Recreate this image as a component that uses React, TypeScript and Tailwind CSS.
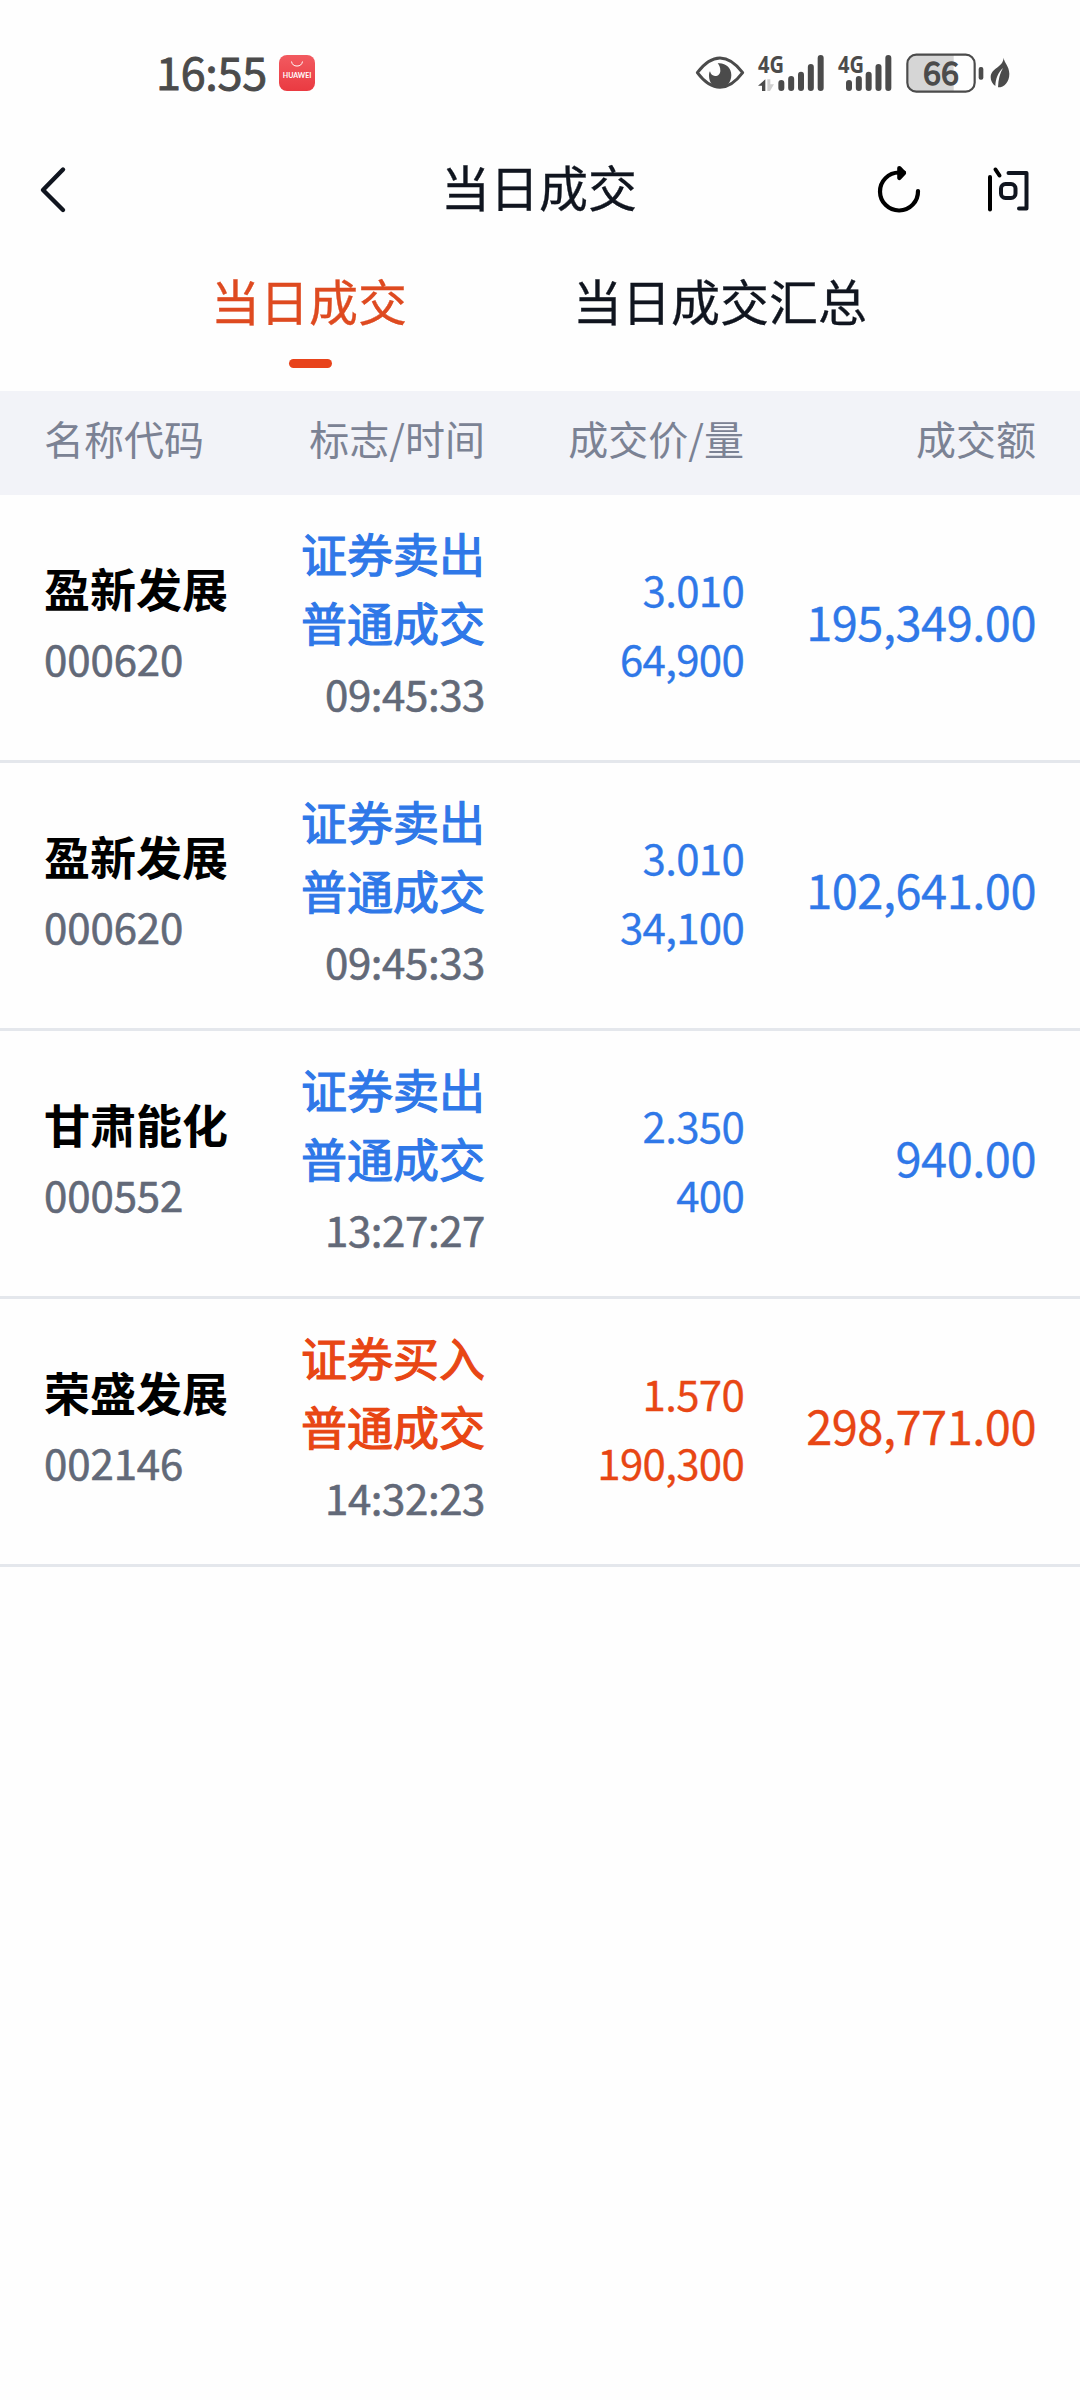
import React from 'react';

interface Trade {
  name: string;
  code: string;
  action: string;
  kind: string;
  time: string;
  price: string;
  volume: string;
  amount: string;
  side: 'sell' | 'buy';
}

const trades: Trade[] = [
  { name: '盈新发展', code: '000620', action: '证券卖出', kind: '普通成交', time: '09:45:33', price: '3.010', volume: '64,900', amount: '195,349.00', side: 'sell' },
  { name: '盈新发展', code: '000620', action: '证券卖出', kind: '普通成交', time: '09:45:33', price: '3.010', volume: '34,100', amount: '102,641.00', side: 'sell' },
  { name: '甘肃能化', code: '000552', action: '证券卖出', kind: '普通成交', time: '13:27:27', price: '2.350', volume: '400', amount: '940.00', side: 'sell' },
  { name: '荣盛发展', code: '002146', action: '证券买入', kind: '普通成交', time: '14:32:23', price: '1.570', volume: '190,300', amount: '298,771.00', side: 'buy' },
];

const EyeIcon = () => (
  <svg width="50" height="36" viewBox="44 46 150 108" fill="none">
    <path d="M51 99 Q84 55 119 55 Q154 55 187 99 Q154 143 119 143 Q84 143 51 99 Z" stroke="#4b4b4b" strokeWidth="9" strokeLinejoin="round" />
    <path d="M112 71 C134 68 153 84 153 106 C153 130 137 144 119 144 C100 144 86 130 86 108 C86 102 87 98 89 95 C91 104 97 109 104 109 C114 109 120 102 120 93 C120 83 117 77 112 71 Z" fill="#4b4b4b" />
  </svg>
);

const bars = [
  { x: 0, y: 120 },
  { x: 29.5, y: 108 },
  { x: 59, y: 95 },
  { x: 88.5, y: 72 },
  { x: 118, y: 45 },
];

const SignalIcon = ({ arrows = false }: { arrows?: boolean }) => {
  const start = arrows ? 61 : 24;
  return (
    <svg width={arrows ? 66 : 54} height="38" viewBox={arrows ? '0 42 198 114' : '0 42 162 114'} className="overflow-visible">
      <text x="0" y="98" fontSize="72" fontWeight="700" textLength="78" lengthAdjust="spacingAndGlyphs" fill="#4b4b4b" className="font-['Noto_Sans']">4G</text>
      {arrows && (
        <>
          <path d="M22 118 V153 H12 V137 H0 Z" fill="#4b4b4b" />
          <path d="M28 118 H37 V133 H48 L36 153 H28 Z" fill="#cfcfcf" />
        </>
      )}
      {bars.map((b) => (
        <rect key={b.x} x={start + b.x} y={b.y} width="18" height={153 - b.y} rx="9" fill="#4b4b4b" />
      ))}
    </svg>
  );
};

const BatteryIcon = () => (
  <svg width="78" height="40" viewBox="79 38 234 120" className="overflow-visible">
    <path d="M110 44 H222 V153 H110 Q84 153 84 127 V70 Q84 44 110 44 Z" fill="#d6d6d6" />
    <rect x="83" y="43" width="202" height="111" rx="27" fill="none" stroke="#4b4b4b" strokeWidth="6.5" />
    <rect x="297" y="80" width="14" height="38" rx="6" fill="#4b4b4b" />
    <text x="184" y="135" fontSize="97" textAnchor="middle" strokeWidth="4" stroke="#4b4b4b" fill="#4b4b4b" className="font-['Noto_Sans_CJK_SC']">66</text>
  </svg>
);

const LeafIcon = () => (
  <svg width="20" height="32" viewBox="330 50 60 96">
    <path d="M371 52 C372 66 388 78 388 100 C388 124 374 141 354 141 C355 117 360 98 369 83 C354 97 347 115 346 137 C337 131 332 121 332 110 C333 82 369 82 371 52 Z" fill="#4b4b4b" />
  </svg>
);

const HuaweiBadge = () => (
  <svg width="36" height="36" viewBox="0 0 36 36">
    <defs>
      <linearGradient id="hw" x1="0" y1="0" x2="0" y2="1">
        <stop offset="0" stopColor="#f25a60" />
        <stop offset="1" stopColor="#ea3a41" />
      </linearGradient>
    </defs>
    <rect width="36" height="36" rx="8" fill="url(#hw)" />
    <path d="M12.5 6.5 A5.6 5.6 0 0 0 23.5 6.5" fill="none" stroke="#fff" strokeWidth="1" />
    <text x="3.8" y="23" fontSize="6.6" fontWeight="700" textLength="28.6" lengthAdjust="spacingAndGlyphs" fill="#fff" className="font-['Lato']">HUAWEI</text>
  </svg>
);

const StatusBar = () => (
  <div className="flex h-[146px] items-center pl-[156px] pr-[70px] text-[#4b4b4b]">
    <span className="w-[123px] pb-[5px] text-[45px] leading-none tracking-[-0.3px] [-webkit-text-stroke:0.9px_currentColor]">16:55</span>
    <HuaweiBadge />
    <div className="ml-auto flex items-center">
      <EyeIcon />
      <span className="ml-[13px]"><SignalIcon arrows /></span>
      <span className="ml-[14px]"><SignalIcon /></span>
      <span className="ml-[14px]"><BatteryIcon /></span>
      <span className="ml-[6px]"><LeafIcon /></span>
    </div>
  </div>
);

const NavBar = () => (
  <div className="grid h-[88px] grid-cols-[1fr_auto_1fr] items-center pl-[38px] pr-[40px]">
    <svg width="32" height="52" viewBox="38 164 32 52" fill="none" stroke="#10151f" strokeWidth="4.4" strokeLinecap="round" strokeLinejoin="round">
      <path d="M63 169.5 L43 190 L63 210" />
    </svg>
    <h1 className="pb-[10px] text-[49px] leading-none text-[#10151f] [-webkit-text-stroke:0.3px_currentColor]">当日成交</h1>
    <div className="flex items-center justify-end gap-[60px] pr-[6px]">
      <svg width="50" height="52" viewBox="874 164 50 52" fill="none" stroke="#000" strokeWidth="4.2" strokeLinecap="round" strokeLinejoin="round">
        <path d="M918 191 A19 19 0 1 1 899 172.5 H904" />
        <path d="M899.3 168 L904 173 L899.3 178 Z" fill="#000" />
      </svg>
      <svg width="50" height="52" viewBox="984 164 50 52" fill="none" stroke="#10151f" strokeWidth="4" strokeLinecap="round" strokeLinejoin="round">
        <path d="M990 177 V209.5" stroke="#000" />
        <path d="M995.5 169.5 L999.5 175.5" stroke="#000" />
        <path d="M1008.5 173 H1026.5 V208.5 H1019" />
        <rect x="1001" y="184" width="14.5" height="14" rx="4.5" />
      </svg>
    </div>
  </div>
);

const Tabs = () => (
  <div className="flex h-[157px] justify-center gap-[166px] pt-[31px] pr-[2px] text-[49px] [-webkit-text-stroke:0.3px_currentColor]">
    <div className="flex flex-col items-center text-[#de4a20]">
      <span className="leading-[70px]">当日成交</span>
      <span className="mt-[24px] ml-[4px] h-[9px] w-[43px] rounded-full bg-[#e8431b]" />
    </div>
    <div className="leading-[70px] text-[#10151f]">当日成交汇总</div>
  </div>
);

const TradeRow = ({ trade }: { trade: Trade }) => {
  const color = trade.side === 'sell' ? 'text-[#2f78e8]' : 'text-[#e84614]';
  return (
    <div className="grid h-[268px] grid-cols-[221px_220px_259px_292px] border-b-[3px] border-[#e4e7ec] px-[44px] leading-[69px]">
      <div className="pt-[58px]">
        <div className="text-[46px] font-bold text-black">{trade.name}</div>
        <div className="text-[42px] leading-[72px] tracking-[-0.1px] text-[#626978] [-webkit-text-stroke:0.6px_currentColor]">{trade.code}</div>
      </div>
      <div className={`pt-[23px] text-right ${color}`}>
        <div className="text-[46px] [-webkit-text-stroke:1.2px_currentColor]">{trade.action}</div>
        <div className="text-[46px] [-webkit-text-stroke:1.2px_currentColor]">{trade.kind}</div>
        <div className="text-[42px] leading-[74px] tracking-[-0.4px] text-[#626978] [-webkit-text-stroke:0.6px_currentColor]">{trade.time}</div>
      </div>
      <div className={`pt-[59px] text-right text-[42px] tracking-[-0.7px] [-webkit-text-stroke:0.3px_currentColor] ${color}`}>
        <div>{trade.price}</div>
        <div>{trade.volume}</div>
      </div>
      <div className={`pt-[91px] text-right text-[47px] tracking-[-0.5px] [-webkit-text-stroke:0.3px_currentColor] ${color}`}>{trade.amount}</div>
    </div>
  );
};

export default function App() {
  return (
    <div className="h-[2400px] w-[1080px] overflow-hidden bg-[#fefefe] font-['Noto_Sans_CJK_SC',sans-serif]">
      <StatusBar />
      <NavBar />
      <Tabs />
      <div className="grid h-[104px] grid-cols-[221px_220px_259px_292px] bg-[#f2f3f8] px-[44px] text-[40px] leading-[94px] text-[#7b8294]">
        <span>名称代码</span>
        <span className="text-right">标志/时间</span>
        <span className="text-right">成交价/量</span>
        <span className="text-right">成交额</span>
      </div>
      {trades.map((trade, idx) => (
        <TradeRow key={idx} trade={trade} />
      ))}
    </div>
  );
}
